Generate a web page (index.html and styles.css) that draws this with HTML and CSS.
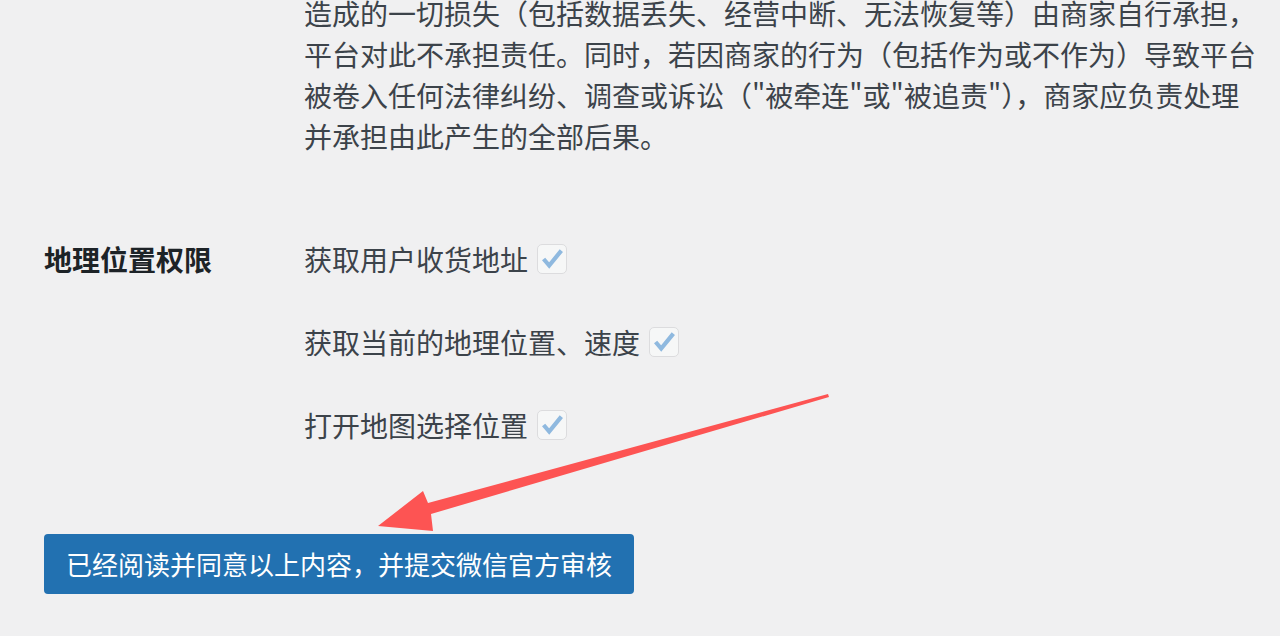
FILE: index.html
```html
<!DOCTYPE html>
<html lang="zh-CN">
<head>
  <meta charset="utf-8">
  <title>提交审核</title>
<link rel="stylesheet" href="styles.css">
</head>
<body>
  <div class="wrap">
    <div class="row row-text">
      <div class="row-label"></div>
      <div class="row-field">
        <p class="notice">造成的一切损失（包括数据丢失、经营中断、无法恢复等）由商家自行承担，<br>平台对此不承担责任。同时，若因商家的行为（包括作为或不作为）导致平台<br>被卷入任何法律纠纷、调查或诉讼（"被牵连"或"被追责"），商家应负责处理<br>并承担由此产生的全部后果。</p>
      </div>
    </div>

    <div class="row row-perms">
      <div class="row-label">地理位置权限</div>
      <div class="row-field perm-list">
        <label class="perm">获取用户收货地址<span class="check"><svg viewBox="0 0 30 30"><path d="M6 15 L12 22 L25 6"/></svg></span></label>
        <label class="perm">获取当前的地理位置、速度<span class="check"><svg viewBox="0 0 30 30"><path d="M6 15 L12 22 L25 6"/></svg></span></label>
        <label class="perm">打开地图选择位置<span class="check"><svg viewBox="0 0 30 30"><path d="M6 15 L12 22 L25 6"/></svg></span></label>
      </div>
    </div>

    <div class="actions">
      <button class="btn-primary" type="button">已经阅读并同意以上内容，并提交微信官方审核</button>
    </div>
  </div>

  <!-- annotation arrow -->
  <svg class="arrow" width="1280" height="636" viewBox="0 0 1280 636">
    <polygon points="828,394 829,397 431,514 433,531 378,526 423,491 428,503"/>
  </svg>
</body>
</html>
```

FILE: styles.css
```css
html, body {
  margin: 0;
  padding: 0;
}

body {
  background: #f0f0f1;
  color: #3c434a;
  font-family: "Noto Sans CJK SC", "Noto Sans", sans-serif;
  font-size: 28px;
  line-height: 42px;
  overflow: hidden;
}

.wrap {
  padding-left: 44px;
  margin-top: -7px;
}

.row { display: flex; }

.row-label {
  width: 260px;
  flex: none;
  font-weight: 700;
  color: #1d2327;
}

.row-field { flex: 1; }

.notice {
  margin: 0;
  line-height: 41px;
  white-space: nowrap;
}

.row-perms { margin-top: 81px; }

.perm-list {
  display: flex;
  flex-direction: column;
  gap: 41px;
}

.perm {
  display: flex;
  align-items: center;
}

.check {
  display: inline-block;
  width: 28px;
  height: 28px;
  margin-left: 9px;
  border: 1px solid #dcdcde;
  border-radius: 5px;
  background: #f6f7f7;
}

.check svg {
  display: block;
  width: 28px;
  height: 28px;
}

.check path {
  fill: none;
  stroke: #8fb9df;
  stroke-width: 4.5;
}

.actions { margin-top: 88px; }

.btn-primary {
  display: block;
  height: 60px;
  padding: 0 22px;
  border: 0;
  border-radius: 4px;
  background: #2271b1;
  color: #fff;
  font-family: inherit;
  font-size: 26px;
  line-height: 60px;
}

.arrow {
  position: absolute;
  left: 0;
  top: 0;
  pointer-events: none;
}

.arrow polygon { fill: #fd5453; }
```
